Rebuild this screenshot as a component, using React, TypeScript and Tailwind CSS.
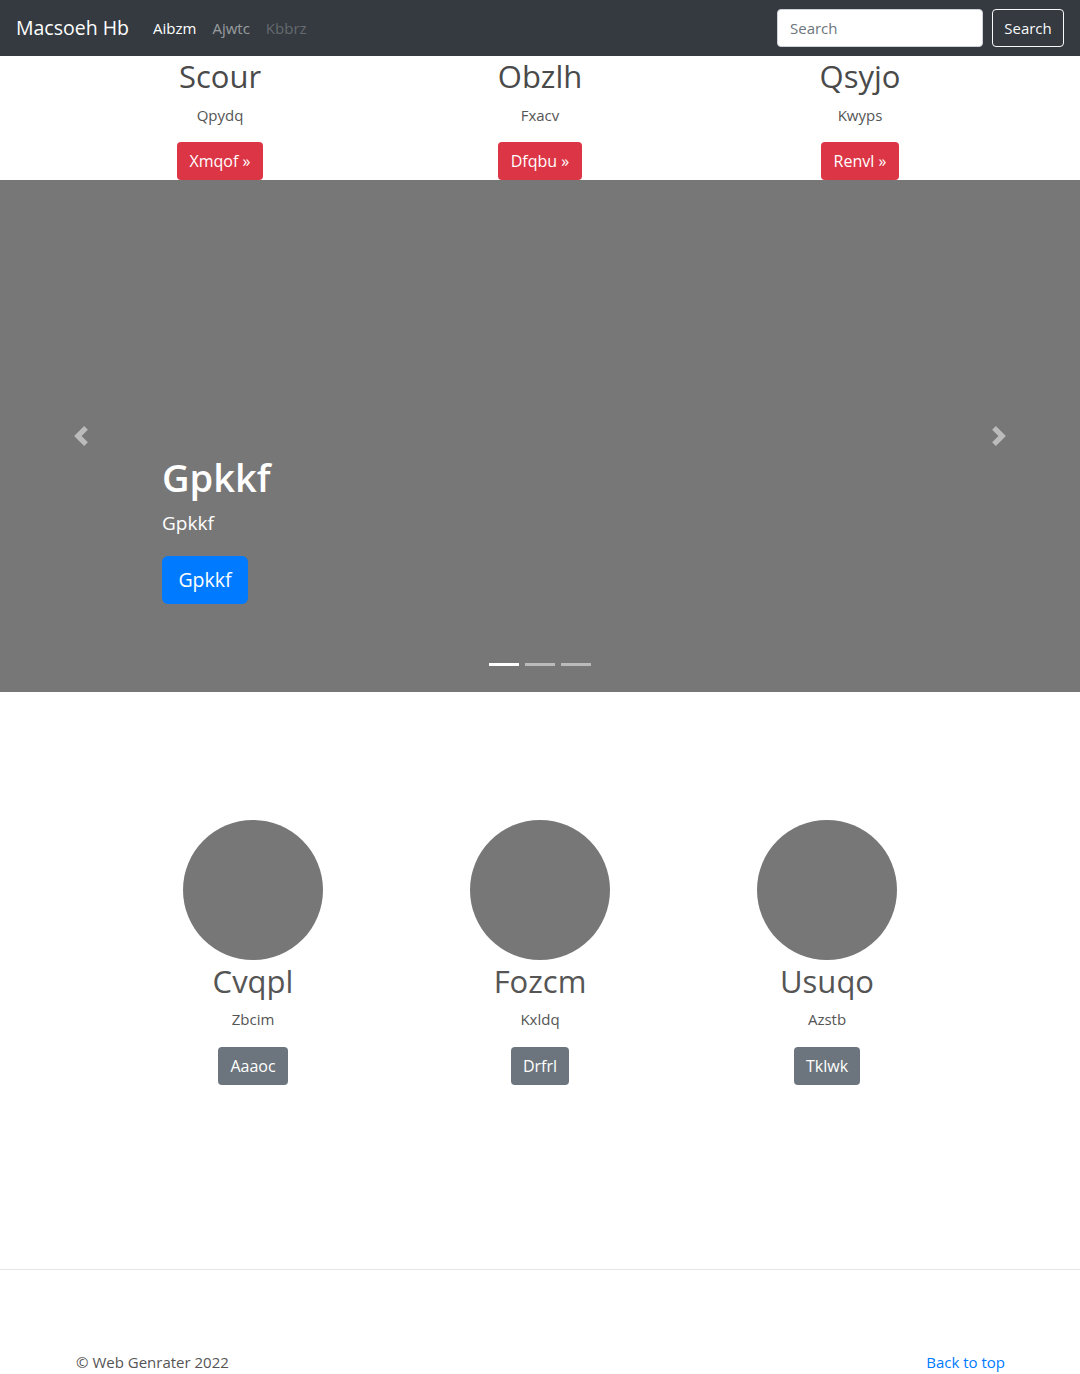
import React from 'react';

const font = { fontFamily: '"Open Sans", "Noto Sans", sans-serif' };

const topCols = [
  { title: 'Scour', text: 'Qpydq', btn: 'Xmqof' },
  { title: 'Obzlh', text: 'Fxacv', btn: 'Dfqbu' },
  { title: 'Qsyjo', text: 'Kwyps', btn: 'Renvl' },
];

const circles = [
  { title: 'Cvqpl', text: 'Zbcim', btn: 'Aaaoc' },
  { title: 'Fozcm', text: 'Kxldq', btn: 'Drfrl' },
  { title: 'Usuqo', text: 'Azstb', btn: 'Tklwk' },
];

const App: React.FC = () => {
  return (
    <div className="min-h-[1374px] bg-white text-[#212529]" style={font}>
      {/* Navbar */}
      <nav className="h-14 bg-[#343a40] px-4 flex items-center justify-between">
        <div className="flex items-center">
          <a href="#" className="text-white text-[19.5px] mr-4 leading-[30px]">Macsoeh Hb</a>
          <a href="#" className="px-2 text-white text-[15px]">Aibzm</a>
          <a href="#" className="px-2 text-white/50 text-[15px]">Ajwtc</a>
          <span className="px-2 text-white/25 text-[15px]">Kbbrz</span>
        </div>
        <div className="flex items-center">
          <input
            placeholder="Search"
            className="w-[206px] h-[38px] px-3 rounded bg-white text-[15px] placeholder:text-[#6c757d] border border-[#ced4da] outline-none mr-[9px]"
          />
          <button className="h-[38px] w-[72px] rounded border border-[#f8f9fa] text-[#f8f9fa] text-[15px]">Search</button>
        </div>
      </nav>

      {/* Top columns */}
      <div className="w-[960px] mx-auto grid grid-cols-3">
        {topCols.map((c) => (
          <div key={c.title} className="flex flex-col items-center">
            <h2 className="text-[31px] leading-[38px] font-medium text-[#4a4a4a] mt-px mb-2">{c.title}</h2>
            <p className="text-[15px] leading-6 text-[#555] mb-[15px]">{c.text}</p>
            <button className="h-[38px] px-[13px] rounded bg-[#dc3545] text-white text-base">{c.btn} »</button>
          </div>
        ))}
      </div>

      {/* Carousel */}
      <div className="relative h-[512px] bg-[#777] flex">
        <div className="w-[15%] flex items-center justify-center opacity-50">
          <svg width="20" height="20" viewBox="0 0 8 8" fill="#fff">
            <path d="M5.25 0l-4 4 4 4 1.5-1.5L4.25 4l2.5-2.5L5.25 0z" />
          </svg>
        </div>
        <div className="flex-1 flex flex-col justify-end items-start pb-[88px] text-white">
          <h1 className="text-[38px] leading-[48px] font-semibold mb-2">Gpkkf</h1>
          <p className="text-[19px] leading-[30px] mb-[18px] -mt-px">Gpkkf</p>
          <button className="h-12 w-[86px] rounded-md bg-[#007bff] text-white text-[19.5px]">Gpkkf</button>
        </div>
        <div className="w-[15%] flex items-center justify-center opacity-50">
          <svg width="20" height="20" viewBox="0 0 8 8" fill="#fff">
            <path d="M2.75 0l-1.5 1.5L3.75 4l-2.5 2.5L2.75 8l4-4-4-4z" />
          </svg>
        </div>
        <div className="absolute left-0 right-0 bottom-[26px] flex justify-center gap-[6px]">
          <span className="w-[30px] h-[3px] bg-white" />
          <span className="w-[30px] h-[3px] bg-white/50" />
          <span className="w-[30px] h-[3px] bg-white/50" />
        </div>
      </div>

      {/* Circles */}
      <div className="w-[861px] mx-auto grid grid-cols-3 pt-32">
        {circles.map((c) => (
          <div key={c.title} className="flex flex-col items-center">
            <div className="w-[140px] h-[140px] rounded-full bg-[#777]" />
            <h2 className="text-[31px] leading-[40px] text-[#555] mt-[1px] mb-[7px]">{c.title}</h2>
            <p className="text-[15px] leading-6 text-[#555] mb-4 -mt-px">{c.text}</p>
            <button className="h-[38px] px-3 rounded bg-[#6c757d] text-white text-base">{c.btn}</button>
          </div>
        ))}
      </div>

      <hr className="mt-[184px] border-t border-[#e5e5e5]" />

      {/* Footer */}
      <footer className="w-[960px] mx-auto px-[15px] pt-[80px] flex justify-between text-[15px] leading-6">
        <p className="text-[#555] ml-px">© Web Genrater 2022</p>
        <a href="#" className="text-[#007bff]">Back to top</a>
      </footer>
    </div>
  );
};

export default App;
